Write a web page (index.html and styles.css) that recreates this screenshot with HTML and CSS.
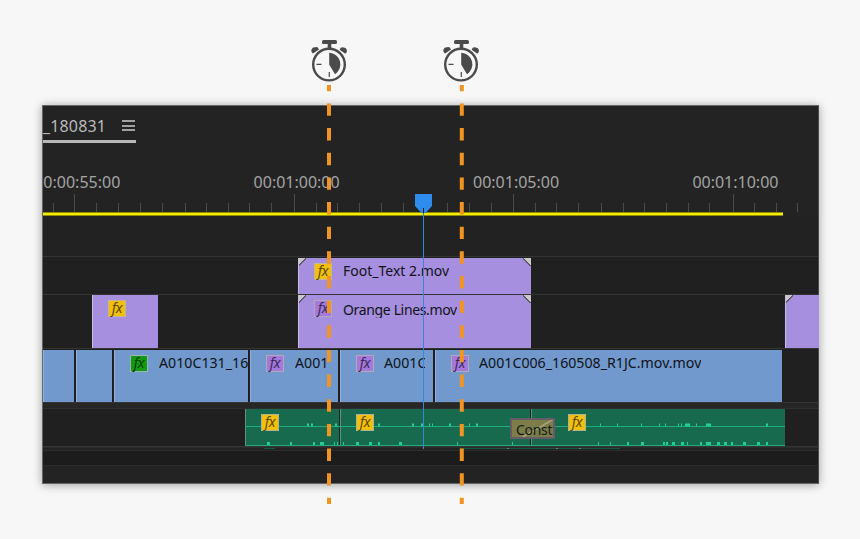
FILE: index.html
```html
<!DOCTYPE html>
<html lang="en">
<head>
<meta charset="utf-8">
<title>Timeline</title>
<link rel="stylesheet" href="styles.css">
</head>
<body>
<svg class="defs" width="0" height="0" aria-hidden="true">
  <symbol id="watch" viewBox="0 0 36 44">
    <g fill="#4b4b4b">
      <rect x="11" y="0" width="15" height="4" rx="1.5"/>
      <rect x="16.7" y="2" width="3.6" height="7"/>
      <path d="M2 13.5A3.4 3.4 0 0 1 4 7.2a3.4 3.4 0 0 1 4 2.3L2.8 13z"/>
      <path d="M34.6 13.5A3.4 3.4 0 0 0 32.6 7.4a3.4 3.4 0 0 0-4 2.3L34 13.6z"/>
      <path d="M18.2 12.8A11.6 11.6 0 0 1 24 34.2L18.2 24.5z"/>
    </g>
    <circle cx="18" cy="24.6" r="15.8" fill="none" stroke="#4b4b4b" stroke-width="2.4"/>
    <path d="M5.5 24.3h5M18.3 32v5" stroke="#4b4b4b" stroke-width="1.2"/>
  </symbol>
</svg>
<main class="stage">
  <header class="watches">
    <svg class="watch"><use href="#watch"/></svg>
    <svg class="watch"><use href="#watch"/></svg>
  </header>
  <section class="panel">
    <div class="head">
      <div class="tab"><span class="title">_180831</span><span class="menu"><i></i><i></i><i></i></span></div>
    </div>
    <div class="ruler">
      <div class="times"><span>00:00:55:00</span><span>00:01:00:00</span><span>00:01:05:00</span><span>00:01:10:00</span></div>
      <svg class="ticks" width="775" height="18">
        <path d="M10.5 9v9M53.5 9v9M75.5 9v9M97.5 9v9M119.5 9v9M142.5 9v9M163.5 9v9M185.5 9v9M206.5 9v9M228.5 9v9M273.5 9v9M294.5 9v9M316.5 9v9M338.5 9v9M360.5 9v9M382.5 9v9M404.5 9v9M426.5 9v9M448.5 9v9M492.5 9v9M513.5 9v9M535.5 9v9M558.5 9v9M580.5 9v9M601.5 9v9M623.5 9v9M645.5 9v9M666.5 9v9M711.5 9v9M733.5 9v9M754.5 9v9"/>
        <path d="M31.5 0v18M251.5 0v18M470.5 0v18M690.5 0v18"/>
      </svg>
    </div>
    <div class="workbar"></div>
    <div class="track empty"></div>
    <div class="track v3">
      <div class="clip violet main handle-l handle-r"><b class="fx gold">fx</b><span>Foot_Text 2.mov</span></div>
    </div>
    <div class="track v2">
      <div class="clip violet short"><b class="fx gold">fx</b></div>
      <div class="clip violet main handle-l handle-r"><b class="fx purple">fx</b><span>Orange Lines.mov</span></div>
      <div class="clip violet last handle-l"></div>
    </div>
    <div class="track v1">
      <div class="clip blue a"></div>
      <div class="clip blue b"></div>
      <div class="clip blue c"><b class="fx green">fx</b><span>A010C131_16</span></div>
      <div class="clip blue d"><b class="fx purple">fx</b><span>A001</span></div>
      <div class="clip blue e"><b class="fx purple">fx</b><span>A001C</span></div>
      <div class="clip blue f"><b class="fx purple">fx</b><span>A001C006_160508_R1JC.mov.mov</span></div>
    </div>
    <div class="divider"></div>
    <div class="track a1">
      <div class="clip audio g"><b class="fx gold">fx</b></div>
      <div class="clip audio h"><b class="fx gold">fx</b></div>
      <div class="clip audio i"><b class="fx gold">fx</b></div>
      <svg class="wave" width="540" height="37">
        <path class="base" d="M0 17.5h540M0 36.5h540"/>
        <path d="M62 16h2M66 16h2M90 16h2M133 16h2M167 16h2M176 16h2M184 16h1M187 16h1M204 16h2M224 16h1M231 16h2M355 16h1M372 16h1M396 16h1M414 16h1M420 16h1M433 16h1M436 16h1M440 16h5M451 16h1M461 16h5M521 16h2"/>
        <path d="M22 34.5h3M45 34.5h2M68 34.5h2M75 34.5h4M89 34.5h1M92 34.5h1M98 34.5h1M111 34.5h3M124 34.5h3M133 34.5h2M154 34.5h3M212 34.5h1M267 34.5h1M353 34.5h1M365 34.5h1M382 34.5h2M396 34.5h3M418 34.5h2M421 34.5h2M427 34.5h3M436 34.5h3M442 34.5h1M455 34.5h2M461 34.5h5M472 34.5h3M479 34.5h3M486 34.5h2M498 34.5h3M512 34.5h3M521 34.5h2"/>
      </svg>
      <div class="transition">Const</div>
    </div>
    <svg class="peek" width="775" height="5">
      <path d="M0 .5h775" stroke="#353535" stroke-width="2"/>
      <path d="M0 4.5h775" stroke="#2c2c2c"/>
      <path d="M221 2.5h11M417 2.5h160" stroke="#17563f"/>
      <path d="M464 2.5h2M513 2.5h2M536 2.5h2" stroke="#777"/>
    </svg>
    <div class="dark"></div>
    <svg class="playhead" width="17" height="256">
      <path d="M0 0h17v12l-6.5 7h-4L0 12z" fill="#2e8cec"/>
      <path d="M8.5 18v237" stroke="#3984d8"/>
      <path d="M8.5 14v5" stroke="#06182a"/>
    </svg>
  </section>
  <svg class="cues" width="860" height="539">
    <path d="M329 85v419M461.8 85v419"/>
  </svg>
</main>
</body>
</html>
```
FILE: styles.css
```css
* { box-sizing: border-box; }
body { margin: 0; background: #f7f7f7; font-family: "Noto Sans", "Open Sans", sans-serif; }
.defs { position: absolute; }
.stage { position: relative; width: 860px; height: 539px; overflow: hidden; }
.watches { display: flex; gap: 96px; height: 105px; padding: 40px 0 0 311px; }
.watch { width: 36px; height: 44px; }

.panel {
  position: relative; width: 777px; height: 379px; margin-left: 42px;
  background: #232323; border: 1px solid #656765; border-right-color: #4d4d4d;
  box-shadow: 0 1px 9px rgba(0, 0, 0, .36);
}
.head { height: 38px; }
.tab { display: flex; align-items: center; justify-content: space-between; width: 93px; height: 37px; border-bottom: 3px solid #b8b8b8; padding: 6px 1px 0 0; }
.title { font-size: 16px; line-height: 30px; letter-spacing: .15px; color: #b9b9b9; }
.menu { display: flex; flex-direction: column; gap: 2px; width: 13px; }
.menu i { height: 2px; margin-bottom: .5px; background: #a2a2a2; }

.ruler { display: flex; flex-direction: column; justify-content: space-between; height: 68px; padding-top: 27px; overflow: hidden; }
.times { display: flex; gap: 133.1px; margin-left: -8.8px; color: #a4a4a4; font-size: 16px; line-height: 22px; white-space: nowrap; }
.times span { width: 86.3px; flex: none; }
.ticks { display: block; fill: none; stroke: #4b4b4b; }
.workbar { width: 740px; height: 4px; background: #f5ec00; border: solid #8f8a08; border-width: 1px 0 .5px; }

.track { position: relative; display: flex; background: #202020; border-bottom: 1px solid #343434; }
.empty { height: 41px; background: #222; }
.v3 { height: 38px; padding-top: 1px; }
.v2 { height: 54px; }
.v1 { height: 54px; padding-top: 1px; }
.divider { height: 6px; background: #262626; border-bottom: 1px solid #303030; }
.a1 { height: 37px; border: 0; padding-left: 202px; gap: 1px; }
.dark { height: 15px; background: #1c1c1c; border-bottom: 1px solid #2b2b2b; }
.peek { display: block; }

.clip { position: relative; display: flex; align-items: flex-start; gap: 10px; flex: none; padding: 5px 8px 0 15px; border-left: 1px solid; overflow: hidden; }
.clip span { min-width: 0; overflow: hidden; white-space: nowrap; font-size: 14px; line-height: 17px; color: #101318; }
.violet { gap: 11px; background: #a68fdf; border-color: #c9bbee; }
.v3 .clip span { margin-top: -1px; }
.v2 .clip span { margin-top: 1px; letter-spacing: -.35px; }
.v1 .clip span { margin-top: -1px; font-size: 14.2px; }
.blue { background: #7199cd; border-color: #91b1dc; }
.audio { background: #176a4d; border-color: #5c9482; }
.main { width: 233px; }
.v3 .main { margin-left: 255px; }
.short { width: 66px; margin-left: 49px; }
.short + .main { margin-left: 140px; }
.last { width: 34px; margin-left: 254px; }
.v1 { gap: 2px; }
.a { width: 31px; }
.b { width: 36px; }
.c { width: 134px; padding-right: 0; gap: 11px; }
.d { width: 88px; gap: 11px; }
.e { width: 93px; }
.f { width: 347px; }
.g { width: 94px; }
.h { width: 190px; }
.i { width: 254px; }
.i.audio { padding-left: 36px; }

.handle-l::before, .handle-r::after { content: ""; position: absolute; top: 0; width: 8px; height: 8px; }
.handle-l::before { left: -1px; background: linear-gradient(135deg, #cac8cb 44%, #57515c 45%, #57515c 56%, transparent 57%); }
.handle-r::after { right: 0; background: linear-gradient(225deg, #cac8cb 44%, #57515c 45%, #57515c 56%, transparent 57%); }

.fx { flex: none; width: 18px; height: 17px; border: 1.5px solid #b2a9b5; font: italic 14px/13px "Noto Sans", sans-serif; letter-spacing: -.3px; text-align: center; color: #2f2a10; }
.gold { background: #f3c007; border-color: #c1b59a; color: #5b4a05; }
.audio .gold { border-color: #a9b39d; }
.green { background: #129a16; border-color: #9eb5ae; color: #063d08; }
.purple { background: #a478dc; color: #3b2a56; }

.wave { position: absolute; left: 202px; top: 0; z-index: 0; fill: none; stroke: #22cf90; stroke-width: 3; pointer-events: none; }
.wave .base { stroke: #20ad7c; stroke-width: 1; }
.a1 .clip { position: static; }
.a1 .fx { position: relative; z-index: 1; }
.transition {
  position: absolute; z-index: 2; left: 467px; top: 9px; width: 45px; height: 21px; padding-left: 4px;
  background: linear-gradient(150deg, #7c7d4b 54%, #a19f70 55%, #a19f70 59%, #7c7d4b 60%);
  border: 2px solid #665b67; font-size: 14px; line-height: 20px; letter-spacing: -.3px; color: #121b14; overflow: hidden;
}
.playhead { position: absolute; left: 372px; top: 88px; z-index: 3; fill: none; }
.cues { position: absolute; left: 0; top: 0; z-index: 4; fill: none; stroke: #f29422; stroke-width: 4; stroke-dasharray: 12.4 12.25; stroke-dashoffset: 6.2; pointer-events: none; }
```
